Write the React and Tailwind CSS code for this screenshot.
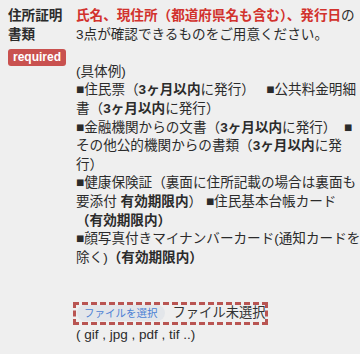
export default function App() {
  const B = ({ children }) => <b className="font-bold">{children}</b>;
  return (
    <div
      className="w-[360px] h-[354px] bg-[#efefef] text-[#2b2b2b] text-[13.6px] leading-[18.6px] overflow-hidden"
      style={{ fontFamily: '"Liberation Sans", "Noto Sans CJK JP", sans-serif' }}
    >
      <div className="flex pt-[7px]">
        <div className="w-[76px] shrink-0 pl-[8px]">
          <div className="w-[58px] font-bold">住所証明書類</div>
          <div className="mt-[5px] inline-block rounded-[3px] bg-[#c9514f] px-[5px] text-[12px] leading-[17px] font-bold text-white">
            required
          </div>
        </div>
        <div className="flex-1 whitespace-nowrap">
          <p>
            <span className="font-bold text-[#d2322d]">氏名、現住所（都道府県名も含む）、発行日</span>の
            <br />
            3点が確認できるものをご用意ください。
            <br />
            <br />
            (具体例)
            <br />
            ■住民票（<B>3ヶ月以内</B>に発行）&nbsp;&nbsp;&nbsp;■公共料金明細
            <br />
            書（<B>3ヶ月以内</B>に発行）
            <br />
            ■金融機関からの文書（<B>3ヶ月以内</B>に発行）&nbsp;&nbsp;■
            <br />
            その他公的機関からの書類（<B>3ヶ月以内</B>に発
            <br />
            行）
            <br />
            ■健康保険証（裏面に住所記載の場合は裏面も
            <br />
            要添付 <B>有効期限内</B>）&nbsp;■住民基本台帳カード
            <br />
            <B>（有効期限内）</B>
            <br />
            ■顔写真付きマイナンバーカード(通知カードを
            <br />
            除く)<B>（有効期限内）</B>
            <br />
            <br />
          </p>
          <div className="mt-[16px] -ml-[3px] flex items-center w-[195px] h-[23px] border-[3px] border-dashed border-[#b95552] pl-[1px]">
            <span className="rounded-full bg-[#e3e6ea] px-[7px] text-[10.5px] leading-[16px] text-[#4a7fd4]">
              ファイルを選択
            </span>
            <span className="ml-[8px] text-[13.3px] text-[#333]">ファイル未選択</span>
          </div>
          <div className="mt-[1px] text-[13.5px]">( gif , jpg , pdf , tif ..)</div>
        </div>
      </div>
    </div>
  );
}
